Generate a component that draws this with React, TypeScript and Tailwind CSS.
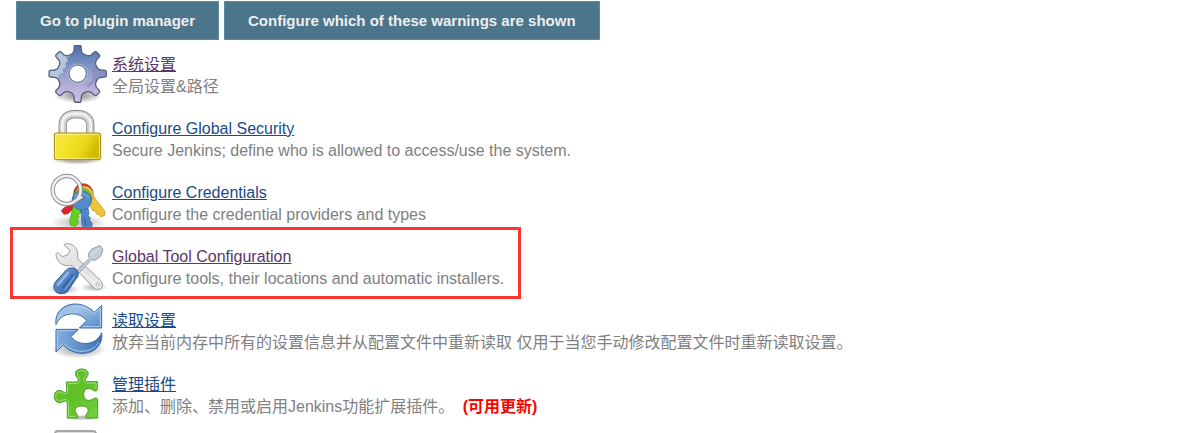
import type { ReactNode } from "react";

type Item = {
  title: string;
  description: string;
  icon: ReactNode;
  visited?: boolean;
  highlighted?: boolean;
  note?: string;
};

function gearOutline(cx: number, cy: number) {
  // each tooth: angle offset in degrees and radius
  const tooth = [
    [-17, 61],
    [-12, 64],
    [-9, 70],
    [-7, 83],
    [-5, 86],
    [5, 86],
    [7, 83],
    [9, 70],
    [12, 64],
    [17, 61],
  ];
  const points: string[] = [];
  for (let i = 0; i < 8; i++) {
    tooth.forEach(([offset, radius]) => {
      const angle = ((i * 45 + offset) * Math.PI) / 180;
      points.push(
        `${(cx + radius * Math.cos(angle)).toFixed(1)} ${(cy + radius * Math.sin(angle)).toFixed(1)}`
      );
    });
  }
  return `M${points.join("L")}Z`;
}

function GearIcon() {
  return (
    <svg viewBox="24 21 180 180" className="w-full h-full" aria-hidden="true">
      <defs>
        <linearGradient id="gear" x1="0" y1="0" x2="0" y2="1">
          <stop offset="0" stopColor="#486fa8" />
          <stop offset="0.45" stopColor="#8b9cc8" />
          <stop offset="0.8" stopColor="#beb4da" />
          <stop offset="1" stopColor="#c9bedd" />
        </linearGradient>
        <radialGradient id="gearShadow">
          <stop offset="0.3" stopColor="#000" stopOpacity="0.35" />
          <stop offset="1" stopColor="#000" stopOpacity="0" />
        </radialGradient>
        <clipPath id="gearClip">
          <path d={gearOutline(113, 107)} />
        </clipPath>
      </defs>
      <ellipse cx="114" cy="172" rx="74" ry="24" fill="url(#gearShadow)" />
      <path d={gearOutline(113, 107)} fill="url(#gear)" />
      <g clipPath="url(#gearClip)">
        <path d="M20 40H96L92 54L80 58L84 68L76 76L78 88L66 94L70 104L56 110L52 122H20Z" fill="#b4c5dd" />
        <path d="M165 72L178 65L210 96V118L170 126L145 150L138 137L153 132L160 113L153 96Z" fill="#8589b7" opacity="0.6" />
      </g>
      <path d={gearOutline(113, 107)} fill="none" stroke="#566182" strokeWidth="4" strokeLinejoin="round" />
      <circle cx="113" cy="107" r="29" fill="none" stroke="#d6d8e8" strokeWidth="3" opacity="0.6" />
      <circle cx="113" cy="107" r="26" fill="#fff" stroke="#59658b" strokeWidth="3" />
    </svg>
  );
}

function LockIcon() {
  return (
    <svg viewBox="24 15 180 180" className="w-full h-full" aria-hidden="true">
      <defs>
        <linearGradient id="lockBody" x1="0" y1="0" x2="1" y2="0.35">
          <stop offset="0" stopColor="#efe04a" />
          <stop offset="0.3" stopColor="#f5e52f" />
          <stop offset="0.7" stopColor="#ecd91a" />
          <stop offset="1" stopColor="#d0b804" />
        </linearGradient>
        <radialGradient id="lockShadow">
          <stop offset="0.4" stopColor="#000" stopOpacity="0.3" />
          <stop offset="1" stopColor="#000" stopOpacity="0" />
        </radialGradient>
      </defs>
      <ellipse cx="112" cy="168" rx="76" ry="14" fill="url(#lockShadow)" />
      <path d="M68 90V62C68 40 84 30 109 30S151 40 151 62V90" fill="none" stroke="#8c908c" strokeWidth="25" />
      <path d="M68 90V62C68 40 84 30 109 30S151 40 151 62V90" fill="none" stroke="#cfd3cf" strokeWidth="19" />
      <path d="M67 88V62C67 40 83 29 109 29S151 41 152 62V88" fill="none" stroke="#f0f2f0" strokeWidth="8" />
      <rect x="43" y="87" width="139" height="80" rx="6" fill="url(#lockBody)" stroke="#a48c0c" strokeWidth="3" />
      <rect x="47" y="91" width="131" height="72" rx="4" fill="none" stroke="#fff6a0" strokeWidth="3" opacity="0.75" />
    </svg>
  );
}

function KeysIcon() {
  return (
    <svg viewBox="24 15 180 180" className="w-full h-full" aria-hidden="true">
      <defs>
        <radialGradient id="keysShadow">
          <stop offset="0.2" stopColor="#000" stopOpacity="0.25" />
          <stop offset="1" stopColor="#000" stopOpacity="0" />
        </radialGradient>
        <clipPath id="keysClip">
          <path d="M24 15H204V178H24Z" />
        </clipPath>
      </defs>
      <g clipPath="url(#keysClip)" strokeLinejoin="round">
        <ellipse cx="116" cy="164" rx="84" ry="24" fill="url(#keysShadow)" />
        <path d="M112 96L92 112L74 118L64 128L72 139L84 137L98 124L122 108Z" fill="#d8272a" stroke="#a51416" strokeWidth="2" />
        <circle cx="130" cy="76" r="29" fill="#dd3030" stroke="#ad1919" strokeWidth="2" />
        <path d="M134 90L154 74L170 98L195 130L194 142L183 147L176 140L169 138L166 128L158 128L146 108Z" fill="#edc33a" stroke="#b98c15" strokeWidth="2" />
        <circle cx="132" cy="82" r="28" fill="#efc53e" stroke="#bb8e18" strokeWidth="2" />
        <path d="M101 101L128 112L121 136L115 140L117 148L112 153L114 164L107 175L92 172L89 160L98 122Z" fill="#65cf22" stroke="#3c9710" strokeWidth="2" />
        <circle cx="127" cy="89" r="28" fill="#77c83b" stroke="#4b9a1c" strokeWidth="2" />
        <path d="M109 112L142 111L147 135L144 144L151 149L149 157L156 165L155 183H136L127 174L122 126Z" fill="#4e86c8" stroke="#285795" strokeWidth="2" />
        <circle cx="125" cy="97" r="29" fill="#568cca" stroke="#2c609e" strokeWidth="2" />
        <path d="M103 86C111 74 136 75 146 89" fill="none" stroke="#7ba7db" strokeWidth="4" />
        <circle cx="123" cy="88" r="8" fill="#2f5f97" />
        <path d="M132 148L139 174" stroke="#2c609e" strokeWidth="3" />
        <circle cx="80" cy="66" r="42" fill="none" stroke="#8b8b8b" strokeWidth="13" />
        <path d="M108 98L125 88" stroke="#777" strokeWidth="12" strokeLinecap="round" />
        <circle cx="80" cy="66" r="42" fill="none" stroke="#eee" strokeWidth="8" />
        <path d="M108 98L125 88" stroke="#e5e5e5" strokeWidth="7" strokeLinecap="round" />
      </g>
    </svg>
  );
}

function ToolsIcon() {
  return (
    <svg viewBox="24 3 180 180" className="w-full h-full" aria-hidden="true">
      <defs>
        <linearGradient id="wrench" x1="0" y1="0" x2="1" y2="1">
          <stop offset="0" stopColor="#f2f2f1" />
          <stop offset="0.5" stopColor="#dededd" />
          <stop offset="1" stopColor="#ededec" />
        </linearGradient>
        <linearGradient id="handle" x1="0" y1="0" x2="1" y2="1">
          <stop offset="0" stopColor="#8bb5e3" />
          <stop offset="0.5" stopColor="#4c80c0" />
          <stop offset="1" stopColor="#2c5b9d" />
        </linearGradient>
        <radialGradient id="toolsShadow">
          <stop offset="0.2" stopColor="#000" stopOpacity="0.25" />
          <stop offset="1" stopColor="#000" stopOpacity="0" />
        </radialGradient>
      </defs>
      <ellipse cx="70" cy="160" rx="48" ry="16" fill="url(#toolsShadow)" />
      <ellipse cx="162" cy="154" rx="42" ry="14" fill="url(#toolsShadow)" />
      <path
        d="M73 25C85 20 103 25 110 40C115 50 113 60 113 68L183 135C195 151 180 167 163 157L96 88C82 92 65 88 55 75C47 65 46 52 52 49L68 62L84 56L90 43L76 31C72 28 71 27 73 25Z"
        fill="url(#wrench)"
        stroke="#9c9e9a"
        strokeWidth="3"
        strokeLinejoin="round"
      />
      <path d="M106 91L172 149" stroke="#fff" strokeWidth="3" opacity="0.8" />
      <circle cx="173" cy="145" r="5" fill="#eee" stroke="#989a96" strokeWidth="2" />
      <path
        d="M108 107L148 67L145 55L154 40L180 29L189 40L181 62L165 73L155 71L115 112Z"
        fill="#c5cedb"
        stroke="#8f99a9"
        strokeWidth="3"
        strokeLinejoin="round"
      />
      <path d="M151 59L176 38" stroke="#dce2ea" strokeWidth="3" />
      <path
        d="M79 102C86 95 101 93 109 101C118 110 116 122 107 130L84 164C76 176 54 176 46 165C39 155 41 143 49 135Z"
        fill="url(#handle)"
        stroke="#2a5491"
        strokeWidth="3"
        strokeLinejoin="round"
      />
      <path d="M54 146L84 110" stroke="#b7d0ee" strokeWidth="7" strokeLinecap="round" opacity="0.65" />
      <path d="M68 156L98 116" stroke="#2f5f9f" strokeWidth="4" strokeLinecap="round" />
      <path d="M75 160L104 122" stroke="#7ba4d4" strokeWidth="4" strokeLinecap="round" />
    </svg>
  );
}

const arrowPath =
  "M48 80C43 44 70 18 106 18C130 18 150 29 163 43L185 22V90H118L140 68C126 51 109 46 91 48C70 50 55 63 48 80Z";

function RefreshIcon() {
  return (
    <svg viewBox="24 9 180 180" className="w-full h-full" aria-hidden="true">
      <defs>
        <linearGradient id="arrow" x1="0" y1="0" x2="1" y2="1">
          <stop offset="0" stopColor="#7fabdd" />
          <stop offset="0.35" stopColor="#a4c5e7" />
          <stop offset="1" stopColor="#5089c9" />
        </linearGradient>
        <linearGradient id="arrowTail" x1="0" y1="0" x2="1" y2="0">
          <stop offset="0" stopColor="#3a70b4" />
          <stop offset="1" stopColor="#83afe0" />
        </linearGradient>
        <radialGradient id="refreshShadow">
          <stop offset="0.3" stopColor="#000" stopOpacity="0.3" />
          <stop offset="1" stopColor="#000" stopOpacity="0" />
        </radialGradient>
      </defs>
      <ellipse cx="116" cy="154" rx="84" ry="28" fill="url(#refreshShadow)" />
      <path d="M116 44C88 46 61 63 56 90L90 91L65 118L75 135C105 155 165 145 175 95L142 90L160 70Z" fill="#fff" />
      <path d={arrowPath} fill="url(#arrow)" stroke="#3b6ead" strokeWidth="3" strokeLinejoin="round" />
      <path d="M53 64C62 28 122 6 162 48L181 30V86H128" fill="none" stroke="#b5d1ef" strokeWidth="3" />
      <g transform="rotate(180 116.5 92)">
        <path d={arrowPath} fill="url(#arrowTail)" stroke="#3b6ead" strokeWidth="3" strokeLinejoin="round" />
        <path d="M58 52C68 24 124 8 162 48L181 30V86H128" fill="none" stroke="#a6c9ee" strokeWidth="3" />
      </g>
    </svg>
  );
}

function PluginIcon() {
  return (
    <svg viewBox="24 9 180 180" className="w-full h-full" aria-hidden="true">
      <defs>
        <linearGradient id="puzzle" x1="0" y1="0" x2="1" y2="1">
          <stop offset="0" stopColor="#68c02e" />
          <stop offset="0.5" stopColor="#5fc026" />
          <stop offset="1" stopColor="#72d23c" />
        </linearGradient>
        <radialGradient id="puzzleShadow">
          <stop offset="0.5" stopColor="#000" stopOpacity="0.25" />
          <stop offset="1" stopColor="#000" stopOpacity="0" />
        </radialGradient>
      </defs>
      <ellipse cx="126" cy="167" rx="54" ry="8" fill="url(#puzzleShadow)" />
      <path
        d="M79 60H108C116 60 117 53 111 46C100 32 109 21 125 21S151 32 140 46C134 53 135 59 142 59H172V80C172 88 166 89 159 84C145 74 131 80 131 97S145 120 159 111C166 106 173 108 173 114V168H141C135 168 135 162 140 156C151 142 141 132 125 132S99 142 110 156C115 162 115 168 109 168H82V126C82 117 76 115 69 119C54 127 43 118 43 103S55 80 69 89C76 94 80 91 80 83Z"
        fill="url(#puzzle)"
        stroke="#4b9a2b"
        strokeWidth="3"
        strokeLinejoin="round"
      />
      <path
        d="M83 64H112C121 60 122 52 115 44C107 34 114 25 125 25S144 34 136 44C129 52 130 60 139 63H168V80M83 64V85C82 95 75 98 67 93C56 86 47 92 47 103S56 122 67 115C78 109 86 115 86 124V164H106"
        fill="none"
        stroke="#a1e576"
        strokeWidth="3"
      />
    </svg>
  );
}

const items: Item[] = [
  { title: "系统设置", description: "全局设置&路径", icon: <GearIcon />, visited: true },
  {
    title: "Configure Global Security",
    description: "Secure Jenkins; define who is allowed to access/use the system.",
    icon: <LockIcon />,
  },
  {
    title: "Configure Credentials",
    description: "Configure the credential providers and types",
    icon: <KeysIcon />,
  },
  {
    title: "Global Tool Configuration",
    description: "Configure tools, their locations and automatic installers.",
    icon: <ToolsIcon />,
    visited: true,
    highlighted: true,
  },
  {
    title: "读取设置",
    description: "放弃当前内存中所有的设置信息并从配置文件中重新读取 仅用于当您手动修改配置文件时重新读取设置。",
    icon: <RefreshIcon />,
  },
  {
    title: "管理插件",
    description: "添加、删除、禁用或启用Jenkins功能扩展插件。",
    icon: <PluginIcon />,
    note: "(可用更新)",
  },
];

function WarningButton({ children }: { children: ReactNode }) {
  return (
    <button
      type="button"
      className="border border-[#5b8ba1] bg-[#4b758b] px-[23px] py-2 text-[15px] leading-[21px] font-bold text-[#eeeeee]"
    >
      {children}
    </button>
  );
}

function ManagementItem({ item }: { item: Item }) {
  return (
    <li className="relative flex h-16 items-start gap-1 pl-12">
      <div className="mt-0.5 size-[60px] shrink-0">{item.icon}</div>
      <div className="pt-[11px] leading-[22px]">
        <a href="#" className={`underline ${item.visited ? "text-[#5c3566]" : "text-[#204a87]"}`}>
          {item.title}
        </a>
        <p className="text-[#808080]">
          {item.description}
          {item.note && <strong className="ml-1 text-[#ff0000]"> {item.note}</strong>}
        </p>
      </div>
      {item.highlighted && (
        <div className="pointer-events-none absolute -top-2 left-2.5 h-[72px] w-[511px] border-3 border-[#fb3434]" />
      )}
    </li>
  );
}

export default function App() {
  return (
    <main className="overflow-hidden bg-white font-['Liberation_Sans','Noto_Sans_CJK_SC',sans-serif] text-base">
      <div className="flex flex-wrap gap-[5px] pt-px pl-4">
        <WarningButton>Go to plugin manager</WarningButton>
        <WarningButton>Configure which of these warnings are shown</WarningButton>
      </div>
      <ul className="pt-[3px]">
        {items.map((item) => (
          <ManagementItem key={item.title} item={item} />
        ))}
      </ul>
      {/* top edge of the next entry */}
      <div className="h-1.5 overflow-hidden pt-[3px] pl-[54px]">
        <div className="h-4 w-[43px] rounded-t border-2 border-[#a4a4a4] bg-[#dedede]" />
      </div>
    </main>
  );
}
